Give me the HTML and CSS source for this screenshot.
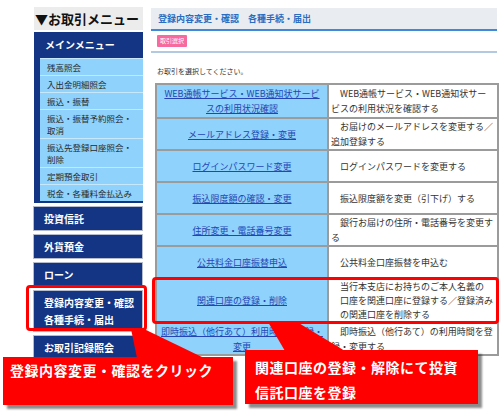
FILE: index.html
```html
<!DOCTYPE html>
<html lang="ja">
<head>
<meta charset="utf-8">
<title>登録内容変更・確認</title>
<link rel="stylesheet" href="styles.css">
</head>
<body>
<div class="page">
  <aside class="side">
    <div class="side-head">▼お取引メニュー</div>
    <div class="main-menu">
      <div class="mm-title">メインメニュー</div>
      <ul class="mm-list">
        <li>残高照会</li>
        <li>入出金明細照会</li>
        <li>振込・振替</li>
        <li>振込・振替予約照会・<br>取消</li>
        <li>振込先登録口座照会・<br>削除</li>
        <li>定期預金取引</li>
        <li>税金・各種料金払込み</li>
      </ul>
    </div>
    <ul class="nav">
      <li>投資信託</li>
      <li>外貨預金</li>
      <li>ローン</li>
      <li>登録内容変更・確認<br>各種手続・届出</li>
      <li>お取引記録照会</li>
    </ul>
  </aside>

  <main class="content">
    <div class="title-bar">登録内容変更・確認　各種手続・届出</div>
    <div class="badge-row"><span class="badge">取引選択</span></div>
    <p class="lead">お取引を選択してください。</p>
    <table class="proc">
      <colgroup><col class="c-link"><col class="c-desc"></colgroup>
      <tr class="r-first">
        <td class="link"><a href="#">WEB通帳サービス・WEB通知状サービ<br>スの利用状況確認</a></td>
        <td class="desc">WEB通帳サービス・WEB通知状サー<br>ビスの利用状況を確認する</td>
      </tr>
      <tr>
        <td class="link"><a href="#">メールアドレス登録・変更</a></td>
        <td class="desc">お届けのメールアドレスを変更する／<br>追加登録する</td>
      </tr>
      <tr>
        <td class="link"><a href="#">ログインパスワード変更</a></td>
        <td class="desc">ログインパスワードを変更する</td>
      </tr>
      <tr>
        <td class="link"><a href="#">振込限度額の確認・変更</a></td>
        <td class="desc">振込限度額を変更（引下げ）する</td>
      </tr>
      <tr>
        <td class="link"><a href="#">住所変更・電話番号変更</a></td>
        <td class="desc">銀行お届けの住所・電話番号を変更す<br>る</td>
      </tr>
      <tr>
        <td class="link"><a href="#">公共料金口座振替申込</a></td>
        <td class="desc">公共料金口座振替を申込む</td>
      </tr>
      <tr class="r-tall">
        <td class="link"><a href="#">関連口座の登録・削除</a></td>
        <td class="desc desc-pad">当行本支店にお持ちのご本人名義の<br>口座を関連口座に登録する／登録済み<br>の関連口座を削除する</td>
      </tr>
      <tr>
        <td class="link"><a href="#">即時振込（他行あて）利用時間の登録・<br>変更</a></td>
        <td class="desc">即時振込（他行あて）の利用時間を登<br>録・変更する</td>
      </tr>
    </table>
  </main>

  <svg class="pointers" width="504" height="413" viewBox="0 0 504 413" aria-hidden="true">
    <polygon class="p-shadow" points="133,331 146,331 206,360 139,360"/>
    <polygon class="p-shadow" points="270,324 299,324 347,353 287,353"/>
    <polygon class="p-fill" points="131,329 144,329 204,358 137,358"/>
    <polygon class="p-fill" points="268,322 297,322 345,351 285,351"/>
  </svg>
  <div class="hl hl-side"></div>
  <div class="hl hl-table"></div>
  <div class="callout callout-1">登録内容変更・確認をクリック</div>
  <div class="callout callout-2">関連口座の登録・解除にて投資<br>信託口座を登録</div>
</div>
</body>
</html>
```
FILE: styles.css
```css
html, body {
  margin: 0;
  padding: 0;
  background: #fff;
  overflow: hidden;
}
body {
  font-family: "Noto Sans CJK JP", "Noto Sans", sans-serif;
  color: #333;
}
.page {
  position: relative;
  width: 504px;
  height: 413px;
  display: flex;
  align-items: flex-start;
}

/* ---------- sidebar ---------- */
.side {
  width: 109px;
  margin: 7px 0 0 34px;
}
.side-head {
  height: 23px;
  line-height: 23px;
  background: #ececec;
  font-size: 13px;
  font-weight: 700;
  color: #111;
  padding-left: 1px;
  white-space: nowrap;
  overflow: hidden;
}
.main-menu {
  margin-top: 2px;
  background: #143584;
  padding-bottom: 2px;
}
.mm-title {
  height: 26px;
  line-height: 26px;
  padding-left: 11px;
  color: #fff;
  font-size: 10px;
  font-weight: 700;
}
.mm-list {
  list-style: none;
  margin: 0 0 0 6px;
  padding: 0;
}
.mm-list li {
  background: #8fd2fb;
  border-top: 1px solid #c6e7fc;
  padding: 2px 4px 2px 7px;
  font-size: 8.5px;
  line-height: 12px;
  color: #2a2a2a;
  white-space: nowrap;
}
.nav {
  list-style: none;
  margin: 0;
  padding: 0;
}
.nav li {
  margin-top: 3px;
  margin-left: -1px;
  background: #143584;
  border: 1px solid #b4bccd;
  padding: 3px 0 3px 10px;
  color: #fff;
  font-size: 10px;
  font-weight: 700;
  line-height: 17px;
  white-space: nowrap;
}

/* ---------- main ---------- */
.content {
  width: 346px;
  margin: 8px 0 0 8px;
}
.title-bar {
  height: 21px;
  line-height: 21px;
  background: #e9edf1;
  border-bottom: 2px solid #3f8ad8;
  padding-left: 7px;
  color: #2a6cc0;
  font-size: 9px;
  font-weight: 700;
  white-space: nowrap;
}
.badge-row {
  display: flex;
  padding: 4px 0 4px 6px;
  border-bottom: 2px solid #b3c9e2;
}
.badge {
  height: 12px;
  line-height: 12px;
  padding: 0 3px;
  background: #f66a9e;
  color: #fff;
  font-size: 6px;
  border-radius: 1px;
}
.lead {
  margin: 12px 0 0 6px;
  font-size: 7px;
  line-height: 12px;
  color: #333;
}
.proc {
  margin: 6px 0 0 4px;
  width: 342px;
  border-collapse: collapse;
  table-layout: fixed;
}
.c-link { width: 172px; }
.c-desc { width: 170px; }
.proc td {
  border: 2px solid #9b9b9b;
  height: 30px;
  padding: 0 2px;
  font-size: 9px;
  line-height: 15px;
  vertical-align: middle;
  white-space: nowrap;
  overflow: hidden;
}
.proc .r-first td { height: 32px; }
.proc .r-tall td { height: 43px; line-height: 14px; }
.link {
  background: #8fd2fb;
  text-align: center;
}
.link a {
  color: #2446b5;
  text-decoration: underline;
}
.desc {
  background: #fff;
  color: #333;
  text-indent: 1em;
}
.proc td.desc-pad {
  text-indent: 0;
  padding-left: 11px;
}

/* ---------- annotations ---------- */
.pointers {
  position: absolute;
  left: 0;
  top: 0;
  pointer-events: none;
}
.p-shadow { fill: rgba(0, 0, 0, 0.35); }
.p-fill { fill: #ff0000; }
.hl {
  position: absolute;
  box-sizing: border-box;
  border: 3px solid #ff0000;
  border-radius: 4px;
}
.hl-side {
  left: 26px;
  top: 285px;
  width: 121px;
  height: 46px;
}
.hl-table {
  left: 152px;
  top: 277px;
  width: 347px;
  height: 47px;
}
.callout {
  position: absolute;
  box-sizing: border-box;
  background: #ff0000;
  color: #fff;
  font-size: 14px;
  font-weight: 700;
  letter-spacing: 0.5px;
  line-height: 25px;
  white-space: nowrap;
  box-shadow: 4px 4px 2px rgba(0, 0, 0, 0.45);
}
.callout-1 {
  left: 3px;
  top: 357px;
  width: 230px;
  height: 48px;
  padding: 1px 0 0 7px;
}
.callout-2 {
  left: 245px;
  top: 350px;
  width: 233px;
  height: 54px;
  padding: 5px 0 0 10px;
}
```
